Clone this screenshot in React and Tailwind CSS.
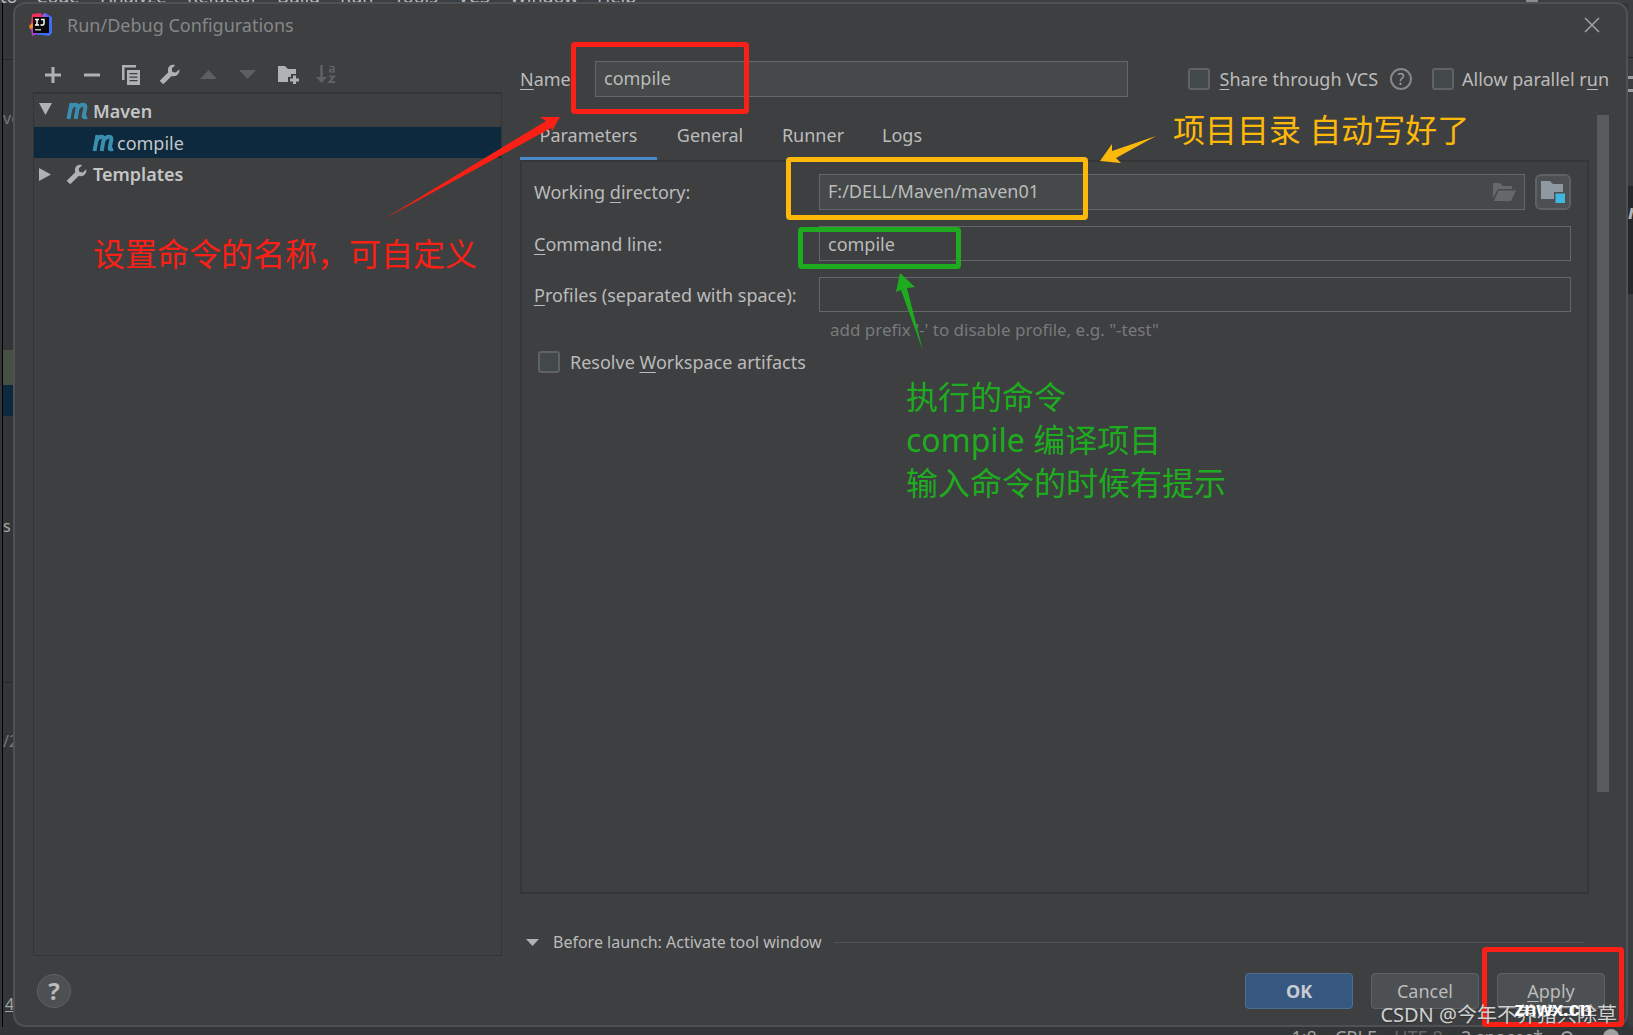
import React from "react";

const MENU = [
  ["Code", "w-[65px]"],
  ["Analyze", "w-[86px]"],
  ["Refactor", "w-[90px]"],
  ["Build", "w-[63px]"],
  ["Run", "w-[54px]"],
  ["Tools", "w-[64px]"],
  ["VCS", "w-[52px]"],
  ["Window", "w-[87px]"],
  ["Help", "w-[60px]"],
];

const toolButton = "flex h-6 w-[39px] items-center justify-center";
const fieldBox = "w-full min-w-0 border border-[#646769] px-2 text-[#bbbbbb] outline-none";
const checkBox = "size-[22px] shrink-0 appearance-none rounded-[3px] border-2 border-[#5f6365] bg-[#43494a]";

function U({ children }) {
  return <span className="underline decoration-1 underline-offset-3">{children}</span>;
}

function Wrench() {
  return (
    <svg className="size-[21px]" viewBox="0 0 21 21" fill="#afb1b3">
      <path d="M20.300 5.300 L16.800 8.500 L13.400 7.900 L12.700 4.600 L16.100 1.200 C12.800 0 9.200 2 8.900 5.500 C8.800 6.500 9 7.400 9.300 8.200 L0.700 16.800 L4.200 20.300 L12.700 11.900 C17 13.500 21 9.800 20.300 5.300 Z" />
    </svg>
  );
}

function MavenMark() {
  return (
    <svg className="h-[18px] w-[23px] shrink-0" viewBox="0 0 23 18" fill="none" stroke="#3a8fb0" strokeWidth="4">
      <path d="M5.500 1 L2.500 17" />
      <path d="M4.500 6.500 C7 2 12 1.500 11.600 5.500 L9.700 17" />
      <path d="M11.600 6.500 C14 2 20 1.500 19.400 5.500 L17.700 14 C17.500 15.500 19 15.500 21 14.800" />
    </svg>
  );
}

function IdeaLogo() {
  return (
    <svg className="size-6" viewBox="0 0 24 24">
      <path d="M3 1 L12 0 L14 6 L7 14 L2 11 Z" fill="#f0305f" />
      <path d="M0 13 L3 10 L7 12 L6 17 L1 16 Z" fill="#f78424" />
      <path d="M2 16 L8 13 L12 22 L8 21 L3 23 Z" fill="#a942d6" />
      <path d="M13 2 L16 0 L23 4 L23 20 L20 23 L13 22 L8 22 L14 10 Z" fill="#3d6df2" />
      <path d="M14 1 L17 0 L18 5 L13 6 Z" fill="#8b5be0" />
      <rect x="4" y="4" width="16" height="16" fill="#080808" />
      <path d="M6 6.500 H10 M8 6.500 V12 M6 12 H10 M12 6.500 H15 V10.500 Q15 12 13.500 12 H11.500" stroke="#fff" strokeWidth="1.500" fill="none" />
      <rect x="6" y="16" width="6" height="1.500" fill="#bbb" />
    </svg>
  );
}

function Backdrop() {
  return (
    <div className="absolute inset-0 flex flex-col overflow-hidden bg-[#333637]" aria-hidden="true">
      <div className="flex h-[3px] shrink-0 items-end overflow-hidden bg-[#3c3f41] text-lg leading-[14px] text-[#bbbbbb]">
        <span className="w-9 shrink-0">to</span>
        {MENU.map(([name, width]) => (
          <span key={name} className={width}>{name}</span>
        ))}
        <span className="mr-[95px] ml-auto h-1 w-3 bg-[#8a8c8e]" />
      </div>
      <div className="flex min-h-0 flex-1 justify-between">
        <div className="ml-0.5 flex w-4 flex-col border-l border-black text-base text-[#a5a5a5]">
          <div className="h-[57px] border-b border-[#252728]" />
          <div className="h-[290px] overflow-hidden pt-[46px] text-[#777]">ve</div>
          <div className="h-[35px] bg-[#465043]" />
          <div className="h-[31px] bg-[#0d293e]" />
          <div className="h-[267px] border-b border-[#252728] pt-[98px]">s</div>
          <div className="flex-1 overflow-hidden pt-[46px] text-[#777]">/2</div>
          <div className="h-[35px] pl-0.5 underline">4</div>
        </div>
        <div className="flex w-[5px] flex-col overflow-hidden bg-[#3a3d3f]">
          <div className="h-[55px] border-b border-[#252728]" />
          <div className="h-[128px] pt-[18px]">
            <div className="h-4 border-y-3 border-dotted border-[#9a9c9e]" />
          </div>
          <div className="h-[108px] bg-[#25282a] pt-3 text-xl font-bold text-[#afb1b3] italic">m</div>
        </div>
      </div>
      <div className="flex h-2 shrink-0 items-start justify-end gap-[18px] overflow-hidden bg-[#333637] pr-3.5 text-lg leading-5 text-[#a0a0a0]">
        <span>1:8</span>
        <span>CRLF</span>
        <span className="text-[#666]">UTF-8</span>
        <span>2 spaces*</span>
        <span className="mt-1 size-3 rounded-full border-2 border-[#a0a0a0]" />
        <span className="mt-0.5 ml-3 size-4 rounded-t-lg bg-[#a0a0a0]" />
      </div>
    </div>
  );
}

function TitleBar() {
  return (
    <header className="flex h-[41px] shrink-0 items-center pr-[26px] pl-3.5">
      <IdeaLogo />
      <h1 className="ml-3.5 flex-1 text-lg text-[#858788]">Run/Debug Configurations</h1>
      <button aria-label="Close">
        <svg className="size-4" viewBox="0 0 16 16" stroke="#a0a2a3" strokeWidth="1.500">
          <path d="M1 1 L15 15 M15 1 L1 15" />
        </svg>
      </button>
    </header>
  );
}

function Toolbar() {
  return (
    <div className="flex h-[47px] shrink-0 items-center pt-3">
      <button className={toolButton} aria-label="Add">
        <svg className="size-4" viewBox="0 0 16 16" fill="#afb1b3"><path d="M6.500 0h3v6.500H16v3H9.500V16h-3V9.500H0v-3h6.500z" /></svg>
      </button>
      <button className={toolButton} aria-label="Remove">
        <svg className="size-4" viewBox="0 0 16 16" fill="#afb1b3"><path d="M0 6.500h16v3H0z" /></svg>
      </button>
      <button className={toolButton} aria-label="Copy">
        <svg className="h-5 w-[18px]" viewBox="0 0 18 20" fill="#afb1b3">
          <path d="M0 0H14V2.500H2.500V15H0Z" />
          <path fillRule="evenodd" d="M5 5H18V20H5Z M7.500 8V9.300H15.500V8Z M7.500 11.500V12.800H15.500V11.500Z M7.500 15V16.300H15.500V15Z" />
        </svg>
      </button>
      <button className={toolButton} aria-label="Edit templates"><Wrench /></button>
      <button className={toolButton} aria-label="Move up">
        <svg className="h-[9px] w-[17px]" viewBox="0 0 17 9" fill="#5c5f61"><path d="M8.500 0 L17 9 H0Z" /></svg>
      </button>
      <button className={toolButton} aria-label="Move down">
        <svg className="h-[9px] w-[17px]" viewBox="0 0 17 9" fill="#5c5f61"><path d="M8.500 9 L17 0 H0Z" /></svg>
      </button>
      <button className={toolButton + " pl-1"} aria-label="New folder">
        <svg className="h-[18px] w-[21px]" viewBox="0 0 21 18" fill="#afb1b3">
          <path d="M0 0H7L10 3H18V8H13V11H10V16H0Z" />
          <path d="M15 9.500h3v3h3v3h-3v3h-3v-3h-3v-3h3z" />
        </svg>
      </button>
      <button className={toolButton} aria-label="Sort alphabetically">
        <svg className="h-[19px] w-[20px]" viewBox="0 0 20 19" fill="none" stroke="#5f6264" strokeWidth="2">
          <path d="M5.500 0V14" strokeWidth="2.500" />
          <path d="M0 12H11L5.500 18Z" fill="#5f6264" stroke="none" />
          <path d="M13.500 1.500H16.500Q18 1.500 18 3V7.500M18 4.500H15Q13.500 4.500 13.500 5.500T15 7H18" strokeWidth="1.700" />
          <path d="M13 11.500H18L13.500 17H19" />
        </svg>
      </button>
    </div>
  );
}

function Sidebar() {
  return (
    <aside className="flex w-[469px] shrink-0 flex-col">
      <Toolbar />
      <ul className="min-h-0 flex-1 border border-t-2 border-[#323435] text-lg text-[#c4c5c6]">
        <li className="flex h-[33px] items-center pl-[5px] font-semibold">
          <svg className="mr-3.5 mb-1 h-3 w-[13px]" viewBox="0 0 13 12" fill="#afb1b3"><path d="M0 0H13L6.500 12Z" /></svg>
          <MavenMark />
          <span className="ml-1">Maven</span>
        </li>
        <li className="flex h-[31px] items-center bg-[#0d293e] pl-[58px]">
          <MavenMark />
          <span className="ml-0.5">compile</span>
        </li>
        <li className="flex h-8 items-center pl-[5px] font-semibold">
          <svg className="mr-[15px] h-[13px] w-3" viewBox="0 0 12 13" fill="#afb1b3"><path d="M0 0V13L12 6.500Z" /></svg>
          <Wrench />
          <span className="ml-1.5">Templates</span>
        </li>
      </ul>
    </aside>
  );
}

function ParametersPanel() {
  return (
    <section className="-mt-px min-h-0 flex-1 border-2 border-[#343637] pt-3 pr-4 pl-3">
      <div className="grid grid-cols-[285px_1fr] items-center gap-y-4">
        <label htmlFor="workdir">Working <U>d</U>irectory:</label>
        <div className="flex gap-2.5">
          <div className="flex h-9 min-w-0 flex-1 items-center border border-[#646769] bg-[#45494a] pr-2">
            <input id="workdir" defaultValue="F:/DELL/Maven/maven01" className="min-w-0 flex-1 px-2 pb-0.5 outline-none" />
            <button aria-label="Browse">
              <svg className="h-[18px] w-[23px]" viewBox="0 0 23 18" fill="#65696b">
                <path d="M0 0H7L10 3H19V6H5L0 15Z" />
                <path d="M5.500 7.500H23L18 18H1Z" />
              </svg>
            </button>
          </div>
          <button aria-label="Insert project path" className="flex size-9 items-center justify-center rounded-md border-2 border-[#5e6163] bg-[#4c5052]">
            <svg className="h-[22px] w-6" viewBox="0 0 24 22">
              <path d="M0 0H9L12 3H22V11H13V18H0Z" fill="#9199a0" />
              <rect x="14.500" y="12.500" width="9.500" height="9.500" fill="#40b6e0" />
            </svg>
          </button>
        </div>
        <label htmlFor="cmd"><U>C</U>ommand line:</label>
        <input id="cmd" defaultValue="compile" className={fieldBox + " h-[35px]"} />
        <label htmlFor="profiles"><U>P</U>rofiles (separated with space):</label>
        <input id="profiles" className={fieldBox + " h-[35px]"} />
      </div>
      <p className="mt-[7px] pl-[296px] text-[17px] leading-[22px] text-[#787a7b]">add prefix '-' to disable profile, e.g. "-test"</p>
      <label className="mt-2.5 ml-1 flex h-[22px] items-center gap-2.5">
        <input type="checkbox" className={checkBox} />
        <span>Resolve <U>W</U>orkspace artifacts</span>
      </label>
    </section>
  );
}

function Main() {
  return (
    <main className="ml-[18px] flex min-w-0 flex-1 flex-col">
      <div className="flex h-[68px] shrink-0 items-center">
        <label htmlFor="name" className="w-[75px] shrink-0"><U>N</U>ame:</label>
        <input id="name" defaultValue="compile" className={fieldBox + " h-9 max-w-[533px] bg-[#45494a] pb-0.5"} />
        <div className="ml-auto flex shrink-0 items-center whitespace-nowrap">
          <label className="flex items-center gap-2.5">
            <input type="checkbox" className={checkBox} />
            <span><U>S</U>hare through VCS</span>
          </label>
          <button aria-label="Help on sharing" className="mx-3 flex size-[22px] items-center justify-center rounded-full border-2 border-[#85878a] text-base text-[#a0a2a4]">?</button>
          <label className="ml-2 flex items-center gap-2">
            <input type="checkbox" className={checkBox} />
            <span>Allow parallel r<U>u</U>n</span>
          </label>
        </div>
      </div>
      <div className="flex min-h-0 flex-1 gap-2">
        <div className="flex min-w-0 flex-1 flex-col">
          <nav className="flex h-12 shrink-0">
            <button className="w-[137px] border-b-4 border-[#4a88c7]">Parameters</button>
            <button className="w-[106px] pb-1">General</button>
            <button className="w-[100px] pb-1">Runner</button>
            <button className="w-[78px] pb-1">Logs</button>
          </nav>
          <ParametersPanel />
          <button className="flex h-[62px] shrink-0 items-center pt-[34px] pl-1.5 text-base">
            <svg className="h-[7px] w-[13px]" viewBox="0 0 13 7" fill="#afb1b3"><path d="M0 0H13L6.500 7Z" /></svg>
            <span className="ml-3.5">Before launch: Activate tool window</span>
            <span className="mr-1 ml-3 h-px flex-1 bg-[#505355]" />
          </button>
        </div>
        <div className="pt-0.5">
          <div className="h-[80.5%] w-3 bg-[#595b5d]" />
        </div>
      </div>
    </main>
  );
}

function Footer() {
  const button = "h-9 w-[108px] rounded border";
  return (
    <footer className="flex h-[69px] shrink-0 items-center gap-[18px] pr-[21px] pl-[22px]">
      <button aria-label="Help" className="mr-auto flex size-[34px] items-center justify-center rounded-full border border-[#5e6163] bg-[#4c5052] text-2xl font-bold">?</button>
      <button className={button + " border-[#4c708c] bg-[#365880] font-bold text-[#c8ccd0]"}>OK</button>
      <button className={button + " border-[#5e6163] bg-[#4c5052]"}>Cancel</button>
      <button className={button + " border-[#5e6163] bg-[#4c5052]"}><U>A</U>pply</button>
    </footer>
  );
}

function Annotations() {
  return (
    <div className="pointer-events-none absolute inset-0 overflow-hidden text-[32px] leading-[43px] whitespace-nowrap">
      <div className="absolute top-[42px] left-[571px] h-[72px] w-[178px] rounded border-5 border-[#fb2015]" />
      <div className="absolute top-[157px] left-[786px] h-[63px] w-[302px] rounded border-5 border-[#fdb90a]" />
      <div className="absolute top-[227px] left-[798px] h-[42px] w-[163px] rounded border-5 border-[#1fab1f]" />
      <div className="absolute right-[9px] bottom-2 h-20 w-[142px] rounded border-5 border-[#fb2015]" />
      <svg className="absolute top-0 left-0 h-[360px] w-[1200px]">
        <path d="M384 219 L546 121 L540 117 L560 117 L552 131 L551 128 L520 145 Z" fill="#fb2015" />
        <path d="M1156 136 L1112 151 L1112 144 L1100 161 L1121 163 L1116 158 Z" fill="#fdb90a" />
        <path d="M923 351 L901 290 L896 292 L900 273 L915 287 L907 288 Z" fill="#1fab1f" />
      </svg>
      <p className="absolute top-[232px] left-[93px] text-[#fb2015]">设置命令的名称，可自定义</p>
      <p className="absolute top-[108px] left-[1173px] text-[#fdb90a]">项目目录 自动写好了</p>
      <p className="absolute top-[375px] left-[906px] text-[#1fab1f]">
        执行的命令<br />compile 编译项目<br />输入命令的时候有提示
      </p>
      <p className="absolute right-4 bottom-1 text-xl leading-8 text-[#d0d0d0] text-shadow-sm">CSDN @今年不养猪只除草</p>
      <p className="absolute right-[41px] bottom-3.5 font-[Liberation_Sans] text-xl leading-6 font-bold text-white">znwx.cn</p>
    </div>
  );
}

export default function App() {
  return (
    <div className="relative flex h-screen overflow-hidden pt-0.5 pr-[5px] pb-2 pl-[13px] font-['Noto_Sans','Noto_Sans_CJK_SC',sans-serif] text-lg text-[#bbbbbb]">
      <Backdrop />
      <div role="dialog" aria-label="Run/Debug Configurations" className="relative flex min-w-0 flex-1 flex-col rounded-xl border-2 border-[#4e5153] bg-[#3d3f41]">
        <TitleBar />
        <div className="flex min-h-0 flex-1 pr-[17px] pl-[18px]">
          <Sidebar />
          <Main />
        </div>
        <Footer />
      </div>
      <Annotations />
    </div>
  );
}
